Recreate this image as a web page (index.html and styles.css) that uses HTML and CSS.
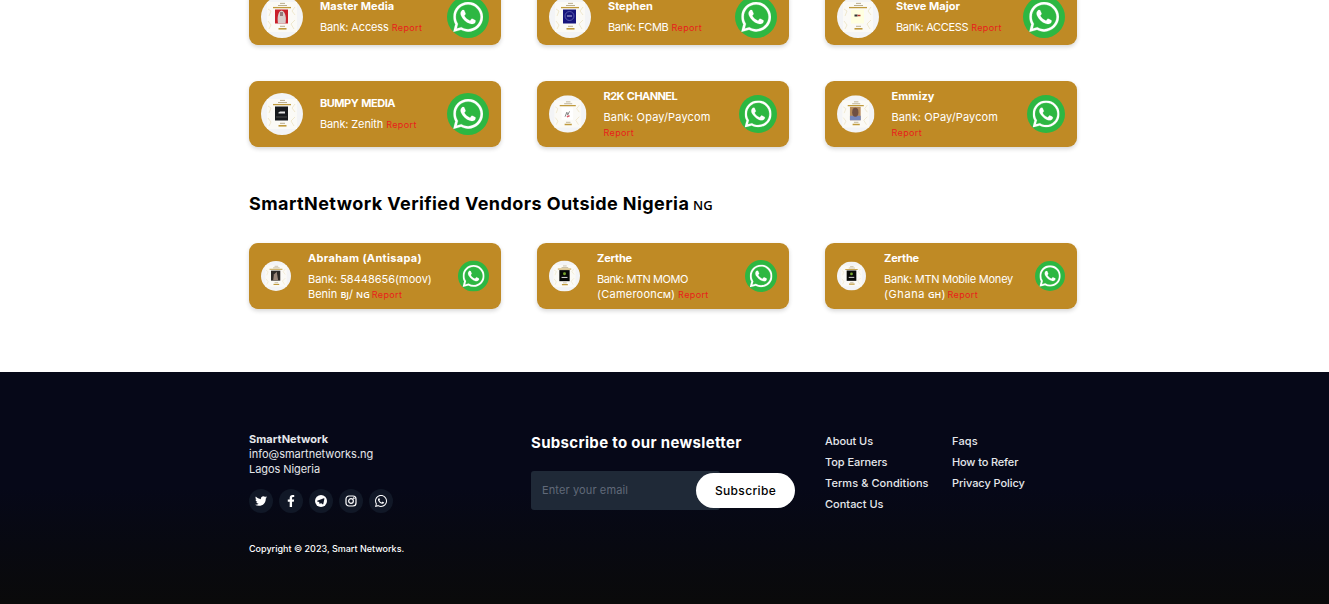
FILE: index.html
```
<!DOCTYPE html>
<html lang="en">
<head>
<meta charset="utf-8">
<title>SmartNetwork Vendors</title>
<link rel="stylesheet" href="styles.css">
</head>
<body>
<svg class="defs" aria-hidden="true">
  <symbol id="whatsapp" viewBox="0 32 448 448"><path d="M380.9 97.1C339 55.1 283.2 32 223.9 32c-122.4 0-222 99.6-222 222 0 39.1 10.2 77.3 29.6 111L0 480l117.7-30.9c32.4 17.7 68.9 27 106.1 27h.1c122.3 0 224.1-99.6 224.1-222 0-59.3-25.2-115-67.1-157zm-157 341.6c-33.2 0-65.7-8.900-94-25.700l-6.700-4-69.800 18.300L72 359.200l-4.400-7c-18.500-29.400-28.200-63.300-28.200-98.200 0-101.700 82.800-184.500 184.600-184.500 49.300 0 95.600 19.200 130.400 54.100 34.800 34.900 56.200 81.200 56.100 130.500 0 101.800-84.900 184.600-186.600 184.600zm101.200-138.200c-5.500-2.800-32.800-16.200-37.900-18-5.100-1.900-8.800-2.800-12.500 2.800-3.700 5.600-14.300 18-17.600 21.800-3.200 3.700-6.500 4.200-12 1.400-32.600-16.300-54-29.100-75.500-66-5.700-9.800 5.700-9.100 16.300-30.300 1.800-3.700.9-6.900-.5-9.700-1.400-2.800-12.500-30.100-17.100-41.200-4.500-10.800-9.100-9.300-12.500-9.500-3.200-.2-6.900-.2-10.600-.2-3.700 0-9.700 1.400-14.800 6.900-5.100 5.600-19.400 19-19.400 46.300 0 27.300 19.900 53.700 22.600 57.400 2.800 3.700 39.100 59.700 94.800 83.800 35.200 15.200 49 16.500 66.600 13.900 10.700-1.600 32.800-13.400 37.400-26.400 4.600-13 4.600-24.100 3.200-26.400-1.300-2.500-5-3.900-10.500-6.600z"/></symbol>
  <symbol id="chat" viewBox="0 0 42 42"><circle cx="21" cy="21" r="21" fill="#2db742"/><use href="#whatsapp" x="6.200" y="6" width="29.800" height="30" fill="#fff" stroke="#fff" stroke-width="3"/></symbol>
  <symbol id="frame" viewBox="0 0 42 42"><circle cx="21" cy="21" r="21" fill="#f3f4f6"/><path d="M6 6h30v30H6z" fill="#fbfaf6"/><path d="M7 13l3 2-2 5M34 11l-3 4 3 4M7 25l3 4-2 4M34 24l-4 4 3 5" fill="none" stroke="#eadfbd" stroke-width=".7"/><path d="M12 11.600h18" stroke="#c09a3c" stroke-width="1.300"/><path d="M19 7.400h5M17 9.500h9M19 30.300h5" stroke="#8f7a4a" stroke-width=".6"/><path d="M17.500 32.800h8" stroke="#c09a3c" stroke-width="1.600"/></symbol>
</svg>

<main class="vendors">
  <section class="grid">
    <article class="card short">
      <svg class="avatar" viewBox="0 0 42 42"><use href="#frame"/><path d="M14 13.500h13v14H14z" fill="#c9202b"/><path d="M17 27.500c-1-6 0-12 3.500-13 4 1 5 7 4 13z" fill="#d8cdcb"/><path d="M19 16h3v4h-3z" fill="#94797a"/></svg>
      <div class="info"><h3 class="t1">Master Media</h3><p><span class="tn3">Bank: Access</span> <a>Report</a></p></div>
      <svg class="wa" viewBox="0 0 42 42"><use href="#chat"/></svg>
    </article>
    <article class="card short">
      <svg class="avatar" viewBox="0 0 42 42"><use href="#frame"/><path d="M14 13.500h13v14H14z" fill="#17157c"/><circle cx="20.500" cy="20" r="4.500" fill="none" stroke="#6869b5" stroke-width=".8"/><path d="M18 20h5" stroke="#c4c4e6"/></svg>
      <div class="info"><h3>Stephen</h3><p><span class="tn7">Bank: FCMB</span> <a>Report</a></p></div>
      <svg class="wa" viewBox="0 0 42 42"><use href="#chat"/></svg>
    </article>
    <article class="card short">
      <svg class="avatar" viewBox="0 0 42 42"><use href="#frame"/><path d="M14 13.500h13v14H14z" fill="#ffffe0"/><path d="M17.500 19.500h3" stroke="#333" stroke-width="2"/><path d="M20.500 19.500h3" stroke="#b33a32" stroke-width="1.500"/></svg>
      <div class="info"><h3>Steve Major</h3><p><span class="tn7">Bank: ACCESS</span> <a>Report</a></p></div>
      <svg class="wa" viewBox="0 0 42 42"><use href="#chat"/></svg>
    </article>
    <article class="card">
      <svg class="avatar" viewBox="0 0 42 42"><use href="#frame"/><path d="M14 13.500h13v14H14z" fill="#16191d"/><path d="M17 20l2-1.500h5v2h-6z" fill="#e4e4e4"/><path d="M15 24h11" stroke="#555" stroke-width=".8"/></svg>
      <div class="info"><h3 class="tn10">BUMPY MEDIA</h3><p><span class="tn3">Bank: Zenith</span> <a>Report</a></p></div>
      <svg class="wa" viewBox="0 0 42 42"><use href="#chat"/></svg>
    </article>
    <article class="card medium">
      <svg class="avatar" viewBox="0 0 42 42"><use href="#frame"/><path d="M14 13.500h13v14H14z" fill="#fff"/><path d="M18 24l2-5 1 3 2-4" fill="none" stroke="#777" stroke-width="1"/><path d="M20 24l3-1" stroke="#d75b68" stroke-width="1.800"/></svg>
      <div class="info"><h3 class="tn12">R2K CHANNEL</h3><p><span class="t3">Bank: Opay/Paycom</span><br><a>Report</a></p></div>
      <svg class="wa" viewBox="0 0 42 42"><use href="#chat"/></svg>
    </article>
    <article class="card medium">
      <svg class="avatar" viewBox="0 0 42 42"><use href="#frame"/><path d="M14.500 13h12v15h-12z" fill="#b68b5b"/><path d="M14.500 23h12v5h-12z" fill="#7585bb"/><ellipse cx="20.500" cy="19" rx="3.500" ry="5" fill="#705044"/></svg>
      <div class="info"><h3 class="t1">Emmizy</h3><p><span class="t2">Bank: OPay/Paycom</span><br><a>Report</a></p></div>
      <svg class="wa" viewBox="0 0 42 42"><use href="#chat"/></svg>
    </article>
  </section>

  <h2><span>SmartNetwork Verified Vendors Outside Nigeria</span> <small>NG</small></h2>

  <section class="grid">
    <article class="card small-a">
      <svg class="avatar" viewBox="0 0 42 42"><use href="#frame"/><path d="M14 13.500h13v14H14z" fill="#2d2927"/><path d="M17 27l1-8 4-4 2 12z" fill="#998579"/></svg>
      <div class="info"><h3 class="t7">Abraham (Antisapa)</h3><p><span>Bank: 58448656(moov)</span><br>Benin <small>BJ</small>/ <small>NG</small> <a class="near">Report</a></p></div>
      <svg class="wa" viewBox="0 0 42 42"><use href="#chat"/></svg>
    </article>
    <article class="card small-b">
      <svg class="avatar" viewBox="0 0 42 42"><use href="#frame"/><path d="M14 13h14v15H14z" fill="#080a08"/><circle cx="21" cy="18" r="2" fill="#77a52d"/><path d="M17 23h8" stroke="#ccc" stroke-width="1.500"/></svg>
      <div class="info"><h3 class="tn4">Zerthe</h3><p><span class="tn9">Bank: MTN MOMO</span><br><span class="t5">(Cameroon</span><small>CM</small>) <a>Report</a></p></div>
      <svg class="wa" viewBox="0 0 42 42"><use href="#chat"/></svg>
    </article>
    <article class="card small-c">
      <svg class="avatar" viewBox="0 0 42 42"><use href="#frame"/><path d="M14 13h14v15H14z" fill="#080a08"/><circle cx="21" cy="18" r="2" fill="#77a52d"/><path d="M17 23h8" stroke="#ccc" stroke-width="1.500"/></svg>
      <div class="info"><h3 class="tn4">Zerthe</h3><p><span class="tn5">Bank: MTN Mobile Money</span><br><span class="t10">(Ghana</span> <small>GH</small>) <a class="near">Report</a></p></div>
      <svg class="wa" viewBox="0 0 42 42"><use href="#chat"/></svg>
    </article>
  </section>
</main>

<footer>
  <div class="footer-grid">
    <div class="about">
      <strong class="t1">SmartNetwork</strong>
      <span>info@smartnetworks.ng</span>
      <span class="tn1">Lagos Nigeria</span>
      <div class="social">
        <a><svg viewBox="0 0 512 512"><path d="M459.370 151.716c.325 4.548.325 9.097.325 13.645 0 138.720-105.583 298.558-298.558 298.558-59.452 0-114.680-17.219-161.137-47.106 8.447.974 16.568 1.299 25.340 1.299 49.055 0 94.213-16.568 130.274-44.832-46.132-.975-84.792-31.188-98.112-72.772 6.498.974 12.995 1.624 19.818 1.624 9.421 0 18.843-1.300 27.614-3.573-48.081-9.747-84.143-51.980-84.143-102.985v-1.299c13.969 7.797 30.214 12.670 47.431 13.319-28.264-18.843-46.781-51.005-46.781-87.391 0-19.492 5.197-37.360 14.294-52.954 51.655 63.675 129.300 105.258 216.365 109.807-1.624-7.797-2.599-15.918-2.599-24.040 0-57.828 46.782-104.934 104.934-104.934 30.213 0 57.502 12.670 76.670 33.137 23.715-4.548 46.456-13.320 66.599-25.340-7.798 24.366-24.366 44.833-46.132 57.827 21.117-2.273 41.584-8.122 60.426-16.243-14.292 20.791-32.161 39.308-52.628 54.253z"/></svg></a>
        <a><svg viewBox="0 0 320 512"><path d="M279.140 288l14.220-92.660h-88.910v-60.130c0-25.350 12.420-50.060 52.240-50.060h40.420V6.260S260.430 0 225.360 0c-73.220 0-121.080 44.380-121.080 124.720v70.620H22.890V288h81.390v224h100.170V288z"/></svg></a>
        <a><svg viewBox="0 0 24 24"><circle cx="12" cy="12" r="12"/><path class="cut" d="M4.500 11.600l13.200-5.200c.8-.3 1.300.2 1.100 1.100l-2.200 10.500c-.2.8-.7 1-1.400.6l-3.400-2.500-1.700 1.700c-.3.3-.8.2-.9-.2l-1-3.700-3.600-1.100c-.8-.3-.8-.8-.1-1.200z"/></svg></a>
        <a><svg viewBox="0 0 24 24" class="outline"><rect x="2" y="2" width="20" height="20" rx="6"/><circle cx="12" cy="12" r="4.700"/><circle cx="17.600" cy="6.400" r=".6"/></svg></a>
        <a><svg><use href="#whatsapp"/></svg></a>
      </div>
      <p class="copy">Copyright © 2023, Smart Networks.</p>
    </div>
    <form class="newsletter">
      <h4>Subscribe to our newsletter</h4>
      <div class="field"><input type="text" placeholder="Enter your email"><button type="button">Subscribe</button></div>
    </form>
    <nav><a class="tn1">About Us</a><a class="tn1">Top Earners</a><a class="t1">Terms &amp; Conditions</a><a>Contact Us</a></nav>
    <nav><a class="t3">Faqs</a><a class="tn3">How to Refer</a><a class="tn1">Privacy Policy</a></nav>
  </div>
</footer>
</body>
</html>
```
FILE: styles.css
```
* { box-sizing: border-box; margin: 0; padding: 0; }
html { overflow: hidden; }
body { height: 604px; overflow: hidden; background: #fff; color: #000; font-family: Inter, sans-serif; display: flex; flex-direction: column; }
.defs { width: 0; height: 0; display: block; flex: none; }
.vendors { width: 828px; margin: -11px 0 0 249px; height: 383px; flex: none; }
.grid { display: grid; grid-template-columns: repeat(3, 252px); gap: 36px; }

.card { height: 66px; padding: 0 12px; border-radius: 9px; background: #bf8a25; color: #fff; display: flex; align-items: center; box-shadow: 0 2px 4px rgba(0, 0, 0, .16); --avatar: 42px; --chat: 42px; --gap: 17px; }
.short { height: 56px; }
.medium { --avatar: 37.500px; --chat: 38px; }
.small-a { --avatar: 30px; --chat: 31px; }
.small-b { --avatar: 31px; --chat: 32px; }
.small-c { --avatar: 29px; --chat: 30px; --gap: 18px; }
.avatar { width: var(--avatar); height: 42px; flex: none; }
.wa { width: var(--chat); height: 42px; flex: none; }
.info { flex: 1; padding-left: var(--gap); white-space: nowrap; }
.info h3 { font-size: 11px; line-height: 15px; font-weight: 700; margin-bottom: 6px; }
.info p { font-size: 11px; line-height: 15px; }
.info a { font-size: 9px; letter-spacing: .37px; line-height: 1; color: #e8201c; }
.info .near { margin-left: -1px; }
.info small { font: 600 9px "Open Sans", sans-serif; line-height: 1; }

h2 { font-size: 18px; font-weight: 700; line-height: 28px; margin: 43px 0 25px; white-space: nowrap; }
h2 span { letter-spacing: .42px; }
h2 small { font: 600 13px "Open Sans", sans-serif; margin-left: -.5px; }

footer { flex: none; height: 232px; padding: 60px 0 0 249px; background: linear-gradient(#060818 0%, #060818 50%, #0a0a0a 100%); color: #fff; }
.footer-grid { display: grid; grid-template-columns: 282px 294px 127px 1fr; }
.about { display: flex; flex-direction: column; font-size: 11px; line-height: 15px; color: #e5e7eb; }
.about strong { font-weight: 700; }
.social { display: flex; gap: 6px; margin-top: 12px; }
.social a { width: 24px; height: 24px; border-radius: 50%; background: #111827; display: flex; align-items: center; justify-content: center; }
.social svg { width: 12px; height: 12px; fill: #fff; }
.social .cut { fill: #111827; }
.social .outline { fill: none; stroke: #fff; stroke-width: 2.400; }
.copy { font-size: 9px; font-weight: 500; line-height: 14px; margin-top: 29px; color: #fff; }
.newsletter h4 { font-size: 15px; font-weight: 700; line-height: 22px; letter-spacing: .32px; }
.field { display: flex; align-items: center; margin-top: 17px; }
.field input { width: 189px; height: 39px; border: 0; border-radius: 3px; background: #1f2937; padding: 0 12px 1px 11px; font: 11px Inter, sans-serif; letter-spacing: .12px; color: #fff; }
.field input::placeholder { color: #616979; opacity: 1; }
.field button { width: 99px; height: 35px; margin-left: -24px; border: 0; border-radius: 18px; background: #fff; color: #000; font: 500 12px Inter, sans-serif; letter-spacing: .33px; }
nav { display: flex; flex-direction: column; gap: 6px; padding-top: 2px; font-size: 11px; font-weight: 500; line-height: 15px; color: #e5e7eb; white-space: nowrap; }

.tn12 { letter-spacing: -.58px; }
.tn10 { letter-spacing: -.5px; }
.tn9 { letter-spacing: -.45px; }
.tn7 { letter-spacing: -.34px; }
.tn5 { letter-spacing: -.23px; }
.tn4 { letter-spacing: -.17px; }
.tn3 { letter-spacing: -.14px; }
.tn1 { letter-spacing: -.07px; }
.t1 { letter-spacing: .06px; }
.t2 { letter-spacing: .11px; }
.t3 { letter-spacing: .15px; }
.t5 { letter-spacing: .23px; }
.t7 { letter-spacing: .33px; }
.t10 { letter-spacing: .57px; }
.tn12, .tn10 { word-spacing: 1px; }
```
